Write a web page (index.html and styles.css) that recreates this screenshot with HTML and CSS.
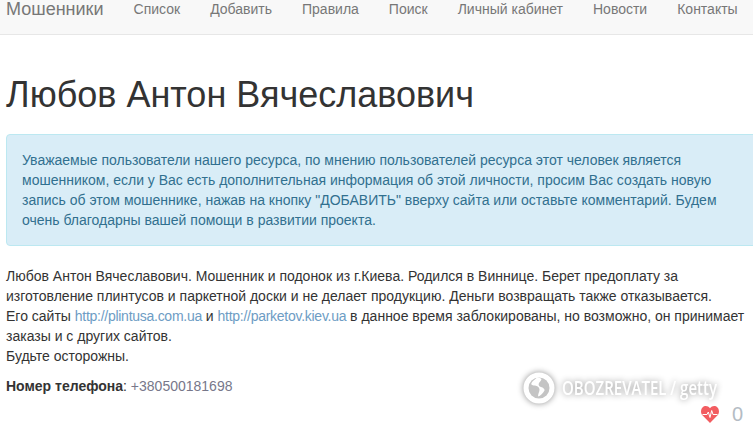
FILE: index.html
```html
<!DOCTYPE html>
<html lang="ru">
  <head>
    <meta charset="UTF-8" />
    <meta name="viewport" content="width=device-width, initial-scale=1.0" />
    <title>Любов Антон Вячеславович</title>
    <link rel="stylesheet" href="styles.css">
  </head>
  <body>
    <nav class="navbar">
      <a class="brand" href="#">Мошенники</a>
      <ul class="nav-links">
        <li><a href="#">Список</a></li>
        <li><a href="#">Добавить</a></li>
        <li><a href="#">Правила</a></li>
        <li><a href="#">Поиск</a></li>
        <li><a href="#">Личный кабинет</a></li>
        <li><a href="#">Новости</a></li>
        <li><a href="#">Контакты</a></li>
      </ul>
    </nav>

    <div class="content">
      <h1>Любов Антон Вячеславович</h1>
      <div class="alert">
        Уважаемые пользователи нашего ресурса, по мнению пользователей ресурса этот человек является мошенником, если у Вас есть дополнительная информация об этой личности, просим Вас создать новую запись об этом мошеннике, нажав на кнопку "ДОБАВИТЬ" вверху сайта или оставьте комментарий. Будем очень благодарны вашей помощи в развитии проекта.
      </div>
      <p class="story">
        Любов Антон Вячеславович. Мошенник и подонок из г.Киева. Родился в Виннице. Берет предоплату за изготовление плинтусов и паркетной доски и не делает продукцию. Деньги возвращать также отказывается.<br>
        Его сайты <a href="#">http://plintusa.com.ua</a> и <a href="#">http://parketov.kiev.ua</a> в данное время заблокированы, но возможно, он принимает заказы и с других сайтов.<br>
        Будьте осторожны.
      </p>
      <p class="phone"><b>Номер телефона</b>: <span class="phone-num">+380500181698</span></p>
      <div class="likes">
        <svg class="heart" viewBox="0 0 18 17" width="18" height="17">
          <path d="M9 17 1.400 9.200C-.5 7.100-.4 3.600 1.500 1.500 3.600-.5 6.900-.4 9 2.200 11.100-.4 14.400-.5 16.500 1.500 18.400 3.600 18.500 7.100 16.600 9.200Z" fill="#f25c60"/>
          <path d="M1.500 8.500H6L7.300 6 9 11.500 10.700 4.500 12 8.500H16.500" fill="none" stroke="#fff" stroke-width="1"/>
        </svg>
        <span class="like-count">0</span>
      </div>
    </div>

    <div class="watermark">
      <svg class="globe" viewBox="0 0 32 32" width="32" height="32">
        <circle cx="16" cy="16" r="15.500" fill="#fff"/>
        <circle cx="16" cy="16" r="10.500" fill="#c4c4c4"/>
        <path d="M14 5.500C12 8 9.500 8.500 8.500 11 7.500 13 10 13.500 12 13.500 14 14 16.500 15 16.500 17.500 16.500 20 15 21.500 15 24.500 17.500 24 20 21 21.500 18.500 22 17 20 15.500 18 15 16 14.500 15 12.500 16 11 17 9.500 18 9 18.500 7 17 5.500 15.500 5.500 14 5.500Z" fill="#fff"/>
      </svg>
      <span class="watermark-text">OBOZREVATEL / getty</span>
    </div>
  </body>
</html>
```

FILE: styles.css
```css
html,
body {
  margin: 0;
  height: 439px;
  overflow: hidden;
}
body {
  position: relative;
  background-color: #fff;
  color: #333;
  font-family: "Liberation Sans", Arial, sans-serif;
  font-size: 14px;
  line-height: 20px;
}
a {
  text-decoration: none;
}
.navbar {
  display: flex;
  height: 34px;
  padding-left: 6px;
  background-color: #f8f8f8;
  border-bottom: 1px solid #e7e7e7;
}
.brand {
  margin-right: 30px;
  color: #777;
  font-size: 18px;
  line-height: 18px;
}
.nav-links {
  display: flex;
  gap: 30px;
  margin: 0;
  padding: 0;
  list-style: none;
}
.nav-links a {
  color: #777;
  line-height: 18px;
  display: block;
}
.content {
  padding: 0 3px 0 6px;
}
h1 {
  margin: 40px 0 19px;
  color: #333;
  font-size: 36px;
  font-weight: 500;
  line-height: 40px;
}
.alert {
  margin-right: -20px;
  margin-bottom: 20px;
  padding: 15px;
  background-color: #d9edf7;
  border: 1px solid #bce8f1;
  border-radius: 4px;
  color: #31708f;
}
.story {
  margin: 0 0 10px;
}
.story a {
  color: #6d9cc4;
  letter-spacing: -0.27px;
}
.phone {
  margin: 0;
}
.phone-num {
  color: #77778a;
}
.likes {
  display: flex;
  justify-content: flex-end;
  align-items: center;
  gap: 13px;
  padding-right: 7px;
  margin-top: 8px;
}
.like-count {
  color: #b4bcc4;
  font-size: 20px;
}
.watermark {
  position: absolute;
  left: 523px;
  top: 372px;
  display: flex;
  align-items: center;
  gap: 7px;
  filter: drop-shadow(0 0 3px rgba(0, 0, 0, 0.45));
}
.watermark-text {
  color: #fff;
  font-family: "Open Sans", sans-serif;
  font-size: 19px;
  font-weight: 600;
  white-space: nowrap;
  transform: scaleX(0.79);
  transform-origin: left center;
}
```
